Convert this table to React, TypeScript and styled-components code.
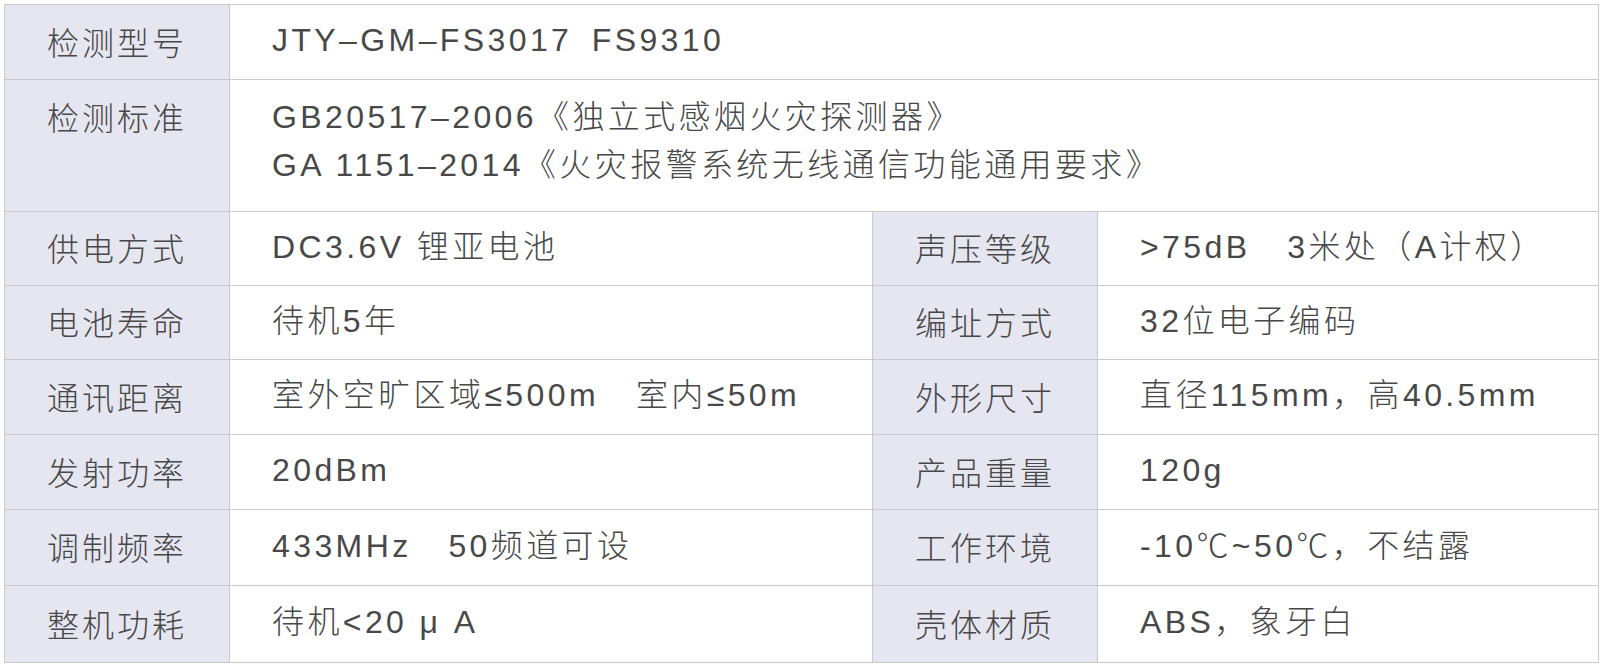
import React from "react";
import styled, { createGlobalStyle } from "styled-components";

const Global = createGlobalStyle`
  html, body { margin: 0; padding: 0; background: #ffffff; }
  body { padding: 4px; }
`;

const Table = styled.div`
  display: grid;
  grid-template-columns: 224px 642px 224px 500px;
  grid-template-rows: 74px 131px 73px 73px 74px 74px 75px 76px;
  gap: 1px;
  width: max-content;
  padding: 1px;
  background: #c9c9cc;
  font-family: "Liberation Sans", "Noto Sans CJK SC", sans-serif;
  font-size: 32px;
  color: #484848;
`;

const Cell = styled.div<{ $span?: number; $tall?: boolean }>`
  grid-column: span ${(p) => p.$span ?? 1};
  display: flex;
  align-items: ${(p) => (p.$tall ? "flex-start" : "center")};
  background: #ffffff;
  box-sizing: border-box;
  line-height: 48px;
`;

const Label = styled(Cell)`
  justify-content: center;
  background: #e6e6f1;
  font-family: "Noto Sans CJK SC", sans-serif;
  font-weight: 300;
  letter-spacing: 3px;
  padding-top: ${(p) => (p.$tall ? "12px" : "0")};
  padding-bottom: ${(p) => (p.$tall ? "0" : "3px")};
`;

const Value = styled(Cell)`
  padding-left: 42px;
  padding-top: ${(p) => (p.$tall ? "13px" : "0")};
  padding-bottom: ${(p) => (p.$tall ? "0" : "4px")};
  letter-spacing: 3.4px;
  white-space: pre;
  font-weight: 300;
`;

const Lines = styled.div`
  display: flex;
  flex-direction: column;
`;

type Pair = [string, string, string, string];

const pairs: Pair[] = [
  ["供电方式", "DC3.6V 锂亚电池", "声压等级", ">75dB   3米处（A计权）"],
  ["电池寿命", "待机5年", "编址方式", "32位电子编码"],
  ["通讯距离", "室外空旷区域≤500m   室内≤50m", "外形尺寸", "直径115mm，高40.5mm"],
  ["发射功率", "20dBm", "产品重量", "120g"],
  ["调制频率", "433MHz   50频道可设", "工作环境", "-10℃~50℃，不结露"],
  ["整机功耗", "待机<20 μ A", "壳体材质", "ABS，象牙白"],
];

export default function App() {
  return (
    <>
      <Global />
      <Table>
        <Label>检测型号</Label>
        <Value $span={3}>JTY–GM–FS3017{"\u2002"}FS9310</Value>
        <Label $tall>检测标准</Label>
        <Value $span={3} $tall>
          <Lines>
            <span>GB20517–2006《独立式感烟火灾探测器》</span>
            <span>GA 1151–2014《火灾报警系统无线通信功能通用要求》</span>
          </Lines>
        </Value>
        {pairs.map((p) => (
          <React.Fragment key={p[0]}>
            <Label>{p[0]}</Label>
            <Value>{p[1]}</Value>
            <Label>{p[2]}</Label>
            <Value>{p[3]}</Value>
          </React.Fragment>
        ))}
      </Table>
    </>
  );
}
